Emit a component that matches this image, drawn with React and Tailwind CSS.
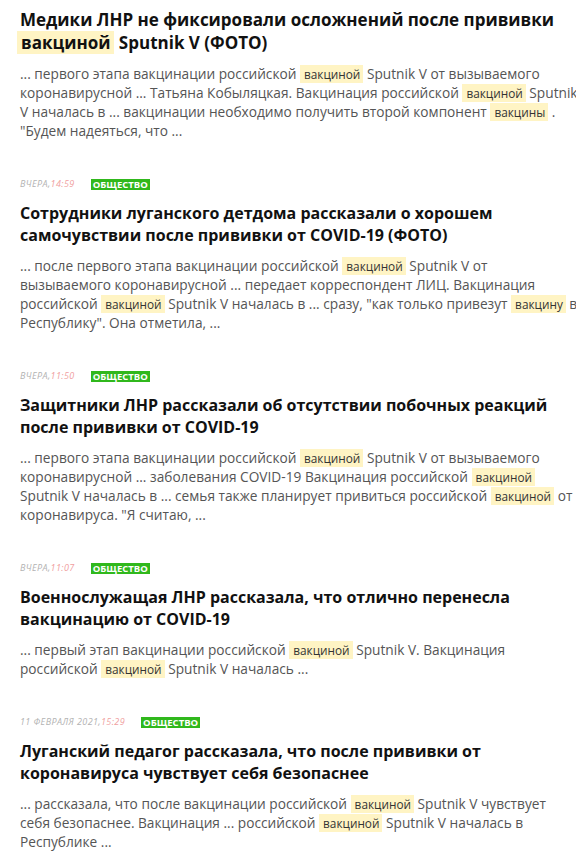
import React from "react";

const Hl = ({ children }) => (
  <span className="bg-[#fff4c4] pl-[4px] pr-[3px] py-[1px] text-[11.8px] leading-[12px] text-[#333]">{children}</span>
);

const Meta = ({ day, time }) => (
  <div className="flex items-center h-[12px] mb-[12px]">
    <span className="italic uppercase text-[9px] leading-[12px] tracking-[0.4px]">
      <span className="text-[#b3b3b3]">{day},</span>
      <span className="text-[#f0a0a0]">{time}</span>
    </span>
    <span className="ml-[16px] bg-[#30b81c] text-white font-bold uppercase text-[9.5px] leading-[11px] px-[2px] h-[11px] flex items-center">
      Общество
    </span>
  </div>
);

const Item = ({ meta, title, children, big }) => (
  <div className="mb-[38px]">
    {meta}
    <h2
      className={
        big
          ? "font-bold text-[17px] leading-[23px] text-[#111]"
          : "font-bold text-[16px] leading-[22px] text-[#111]"
      }
    >
      {title}
    </h2>
    <p className="mt-[10px] text-[13.7px] leading-[19px] text-[#555]">{children}</p>
  </div>
);

export default function App() {
  return (
    <div
      className="w-[576px] h-[855px] overflow-hidden bg-white"
      style={{ fontFamily: '"Open Sans", "Noto Sans", sans-serif' }}
    >
      <div className="w-[579px] pl-[20px] pt-[8px]">
        <Item
          big
          title={
            <>
              Медики ЛНР не фиксировали осложнений после прививки{" "}
              <span className="bg-[#fff4c4] ml-[-3px] px-[4px] leading-[17px]">вакциной</span> Sputnik V (ФОТО)
            </>
          }
        >
          ... первого этапа вакцинации российской <Hl>вакциной</Hl> Sputnik V от вызываемого коронавирусной ... Татьяна Кобыляцкая. Вакцинация российской <Hl>вакциной</Hl> Sputnik V началась в ... вакцинации необходимо получить второй компонент <Hl>вакцины</Hl> . "Будем надеяться, что ...
        </Item>
        <Item
          meta={<Meta day="Вчера" time="14:59" />}
          title="Сотрудники луганского детдома рассказали о хорошем самочувствии после прививки от COVID-19 (ФОТО)"
        >
          ... после первого этапа вакцинации российской <Hl>вакциной</Hl> Sputnik V от вызываемого коронавирусной ... передает корреспондент ЛИЦ. Вакцинация российской <Hl>вакциной</Hl> Sputnik V началась в ... сразу, "как только привезут <Hl>вакцину</Hl> в Республику". Она отметила, ...
        </Item>
        <Item
          meta={<Meta day="Вчера" time="11:50" />}
          title="Защитники ЛНР рассказали об отсутствии побочных реакций после прививки от COVID-19"
        >
          ... первого этапа вакцинации российской <Hl>вакциной</Hl> Sputnik V от вызываемого коронавирусной ... заболевания COVID-19 Вакцинация российской <Hl>вакциной</Hl> Sputnik V началась в ... семья также планирует привиться российской <Hl>вакциной</Hl> от коронавируса. "Я считаю, ...
        </Item>
        <Item
          meta={<Meta day="Вчера" time="11:07" />}
          title="Военнослужащая ЛНР рассказала, что отлично перенесла вакцинацию от COVID-19"
        >
          ... первый этап вакцинации российской <Hl>вакциной</Hl> Sputnik V. Вакцинация российской <Hl>вакциной</Hl> Sputnik V началась ...
        </Item>
        <Item
          meta={<Meta day="11 февраля 2021" time="15:29" />}
          title="Луганский педагог рассказала, что после прививки от коронавируса чувствует себя безопаснее"
        >
          ... рассказала, что после вакцинации российской <Hl>вакциной</Hl> Sputnik V чувствует себя безопаснее. Вакцинация ... российской <Hl>вакциной</Hl> Sputnik V началась в Республике ...
        </Item>
      </div>
    </div>
  );
}
